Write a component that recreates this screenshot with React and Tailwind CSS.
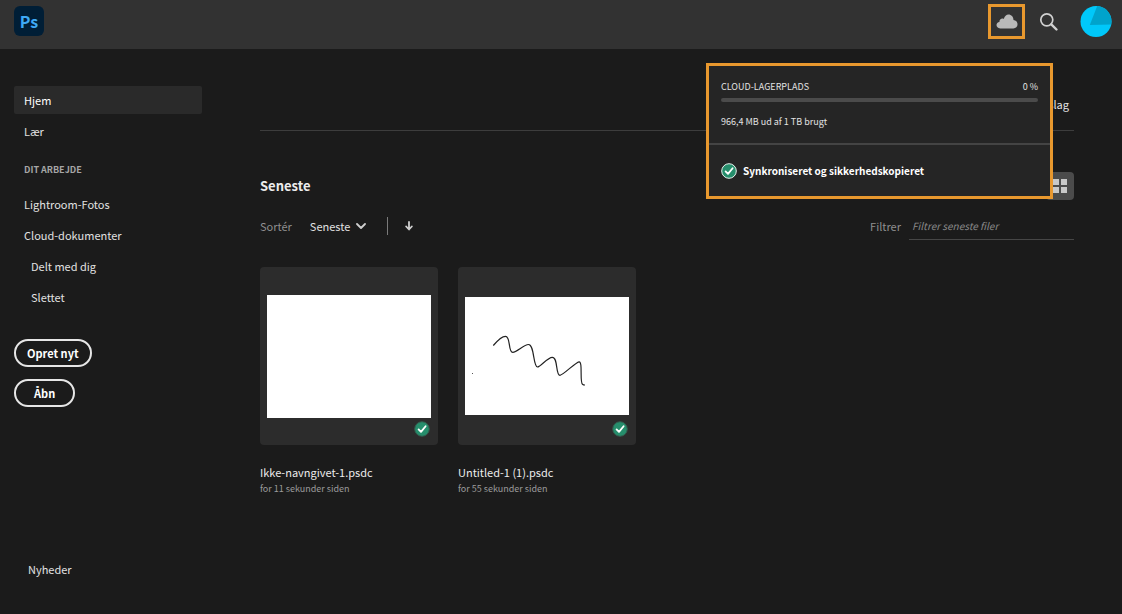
import React from "react";

const workLinks = [
  { label: "Lightroom-Fotos" },
  { label: "Cloud-dokumenter" },
  { label: "Delt med dig", nested: true },
  { label: "Slettet", nested: true },
];

const files = [
  { name: "Ikke-navngivet-1.psdc", time: "for 11 sekunder siden" },
  { name: "Untitled-1 (1).psdc", time: "for 55 sekunder siden", sketch: true },
];

function CheckBadge({ className, ring }) {
  return (
    <svg viewBox="0 0 16 16" className={className} aria-hidden="true">
      <circle cx="8" cy="8" r="7.3" fill="#268e6c" stroke={ring} strokeWidth="1" />
      <path d="M4.6 8.4 7 10.9l4.6-5.6" fill="none" stroke="#fff" strokeWidth="1.8" strokeLinecap="round" strokeLinejoin="round" />
    </svg>
  );
}

function Header() {
  return (
    <header className="flex h-[49px] shrink-0 items-start justify-between bg-[#323232] pl-3.5 pr-2.5">
      <div className="mt-1.5 flex size-[30px] items-center justify-center rounded-md bg-[#001e36] text-base leading-none font-bold text-[#3fa9f5]">
        Ps
      </div>
      <div className="flex items-center pt-1">
        <button type="button" aria-label="Cloud-lagerplads" className="flex h-[35px] w-[37px] items-center justify-center border-3 border-[#e8982e]">
          <svg viewBox="0 0 22 16" className="h-4 w-[22px]" fill="#b9b9b9">
            <path d="M4.2 14.4C1.900 14.400.5 13 .5 11.100c0-1.700 1.200-2.900 2.900-3.100C3.300 5.800 4.800 4.600 6.400 4.600c.5 0 1 .1 1.400.3C8.600 2.200 10.400.6 12.500.6c2.800 0 4.900 2.300 5 5.500 2.300.200 4 1.900 4 4.200 0 2.400-1.700 4.100-4.100 4.100z" />
          </svg>
        </button>
        <button type="button" aria-label="Søg" className="ml-3.5 size-5">
          <svg viewBox="0 0 20 20" className="size-5" fill="none" stroke="#d0d0d0">
            <circle cx="7.800" cy="7.800" r="6" strokeWidth="1.700" />
            <path d="m12.300 12.300 5.200 5.200" strokeWidth="2.400" strokeLinecap="round" />
          </svg>
        </button>
        <button type="button" aria-label="Konto" className="ml-[21px] size-8">
          <svg viewBox="0 0 32 32" className="size-8">
            <circle cx="16" cy="15.500" r="15.500" fill="#00c8fa" />
            <path d="M17.200 0A15.500 15.500 0 0 1 31.200 18.600L9.800 18.900z" fill="#00a3cc" />
          </svg>
        </button>
      </div>
    </header>
  );
}

function Sidebar() {
  return (
    <aside className="flex w-[202px] shrink-0 flex-col pt-[37px] pl-3.5 text-[11px] text-[#e2e2e2]">
      <nav className="flex flex-col gap-[3px]">
        <a href="#hjem" className="flex h-7 items-center rounded-xs bg-[#2a2a2a] px-2.5 text-white">Hjem</a>
        <a href="#laer" className="flex h-7 items-center px-2.5">Lær</a>
        <h2 className="mt-2 mb-[3px] flex h-7 items-center px-2.5 text-[9px] font-bold text-[#a6a6a6]">DIT ARBEJDE</h2>
        {workLinks.map((link) => (
          <a
            key={link.label}
            href={`#${link.label}`}
            className={link.nested ? "flex h-7 items-center pl-[17px]" : "flex h-7 items-center px-2.5"}
          >
            {link.label}
          </a>
        ))}
      </nav>
      <div className="mt-7 flex flex-col items-start gap-3 font-bold text-white">
        <button type="button" className="h-7 rounded-full border-2 border-[#e6e6e6] px-[11px]">Opret nyt</button>
        <button type="button" className="h-7 rounded-full border-2 border-[#e6e6e6] px-[18px]">Åbn</button>
      </div>
      <a href="#nyheder" className="mt-auto mb-[31px] flex h-7 items-center pl-3.5">Nyheder</a>
    </aside>
  );
}

function FileCard({ file }) {
  return (
    <article className="w-[178px]">
      <div className="relative flex h-[178px] items-center rounded-sm bg-[#2c2c2c] px-[7px]">
        {file.sketch ? (
          <svg viewBox="0 0 164 118" className="w-full bg-white" fill="none" stroke="#222" strokeWidth="1.200">
            <path d="M28.300 48.500C32.500 43.500 36.500 39.300 40.500 39.300c5.500 0 2.300 16 7.200 16 4.500 0 11-7.800 15.800-7.800 6 0 4.500 22.500 9 22.500 3 0 10-9.700 14.800-9.700 6 0 3 18 7.700 18 3 0 15.500-13 19-13.500 4-.5.500 20.500 3.500 22.500 1 .8 1.500.700 2.500.700" />
            <path d="M7 76.500h1" stroke="#555" />
          </svg>
        ) : (
          <div className="h-[123px] w-full bg-white" />
        )}
        <CheckBadge className="absolute right-2 bottom-2 size-4" ring="#34594c" />
      </div>
      <h3 className="mt-[18px] text-[11px] leading-[18px] text-[#ececec]">{file.name}</h3>
      <p className="text-[9px] leading-4 text-[#9c9c9c]">{file.time}</p>
    </article>
  );
}

function Main() {
  return (
    <main className="ml-[58px] mr-12 min-w-0 grow">
      <div className="flex h-[82px] items-end justify-end border-b border-[#3d3d3d] pr-[5px] pb-4">
        <button type="button" className="text-[11px] leading-5 text-[#e2e2e2]">Skjul forslag</button>
      </div>

      <div className="mt-[41px] flex h-7 items-center justify-between">
        <h1 className="text-[13px] leading-5 font-bold text-[#ececec]">Seneste</h1>
        <button type="button" aria-label="Gittervisning" className="flex size-7 items-center justify-center rounded-sm bg-[#4b4b4b]">
          <svg viewBox="0 0 14 14" className="size-3.5" fill="#c8c8c8">
            <path d="M0 0h6v6H0zM8 0h6v6H8zM0 8h6v6H0zM8 8h6v6H8z" />
          </svg>
        </button>
      </div>

      <div className="mt-3 flex h-7 items-center justify-between text-[11px]">
        <div className="flex items-center">
          <label htmlFor="sort" className="text-[#8f8f8f]">Sortér</label>
          <div className="ml-[18px] grid items-center">
            <select id="sort" className="col-start-1 row-start-1 h-6 w-14 appearance-none text-[#e2e2e2]">
              <option>Seneste</option>
            </select>
            <svg viewBox="0 0 10 6" className="pointer-events-none col-start-1 row-start-1 ml-[46px] h-1.5 w-2.5" fill="none" stroke="#cfcfcf" strokeWidth="1.800" strokeLinecap="round" strokeLinejoin="round">
              <path d="m1 1 4 4 4-4" />
            </svg>
          </div>
          <span className="ml-[21px] h-[18px] w-px bg-[#7a7a7a]" />
          <button type="button" aria-label="Sorteringsrækkefølge" className="ml-[17px]">
            <svg viewBox="0 0 8 10" className="h-2.5 w-2" fill="none" stroke="#d0d0d0" strokeWidth="1.800" strokeLinecap="round" strokeLinejoin="round">
              <path d="M4 1v7M1.200 5.500 4 8.500l2.800-3" />
            </svg>
          </button>
        </div>
        <div className="flex items-center gap-2">
          <label htmlFor="filter" className="text-[#8f8f8f]">Filtrer</label>
          <input
            id="filter"
            type="text"
            placeholder="Filtrer seneste filer"
            className="h-7 w-[165px] border-b border-[#464646] px-[3px] text-[10px] italic outline-none placeholder:text-[#8a8a8a]"
          />
        </div>
      </div>

      <div className="mt-[27px] flex flex-wrap gap-5">
        {files.map((file) => (
          <FileCard key={file.name} file={file} />
        ))}
      </div>
    </main>
  );
}

function CloudPopover() {
  return (
    <section className="absolute top-[63px] right-[69px] w-[347px] border-3 border-[#e8982e] bg-[#252525] text-[9px] text-[#e2e2e2]">
      <div className="border-b-2 border-[#444] px-3 py-[13px]">
        <div className="flex justify-between leading-4">
          <span>CLOUD-LAGERPLADS</span>
          <span>0 %</span>
        </div>
        <div className="mt-[3px] h-1 rounded-full bg-[#4b4b4b]" />
        <p className="mt-3 leading-4">966,4 MB ud af 1 TB brugt</p>
      </div>
      <div className="flex h-[51px] items-center gap-1.5 px-3 text-[10px] font-bold text-white">
        <CheckBadge className="size-4" ring="#e6f2ee" />
        Synkroniseret og sikkerhedskopieret
      </div>
    </section>
  );
}

function App() {
  return (
    <div className="relative flex min-h-screen flex-col bg-[#1b1b1b] font-['Noto_Sans_CJK_JP','Noto_Sans',sans-serif]">
      <Header />
      <div className="flex grow">
        <Sidebar />
        <Main />
      </div>
      <CloudPopover />
    </div>
  );
}

export default App;
